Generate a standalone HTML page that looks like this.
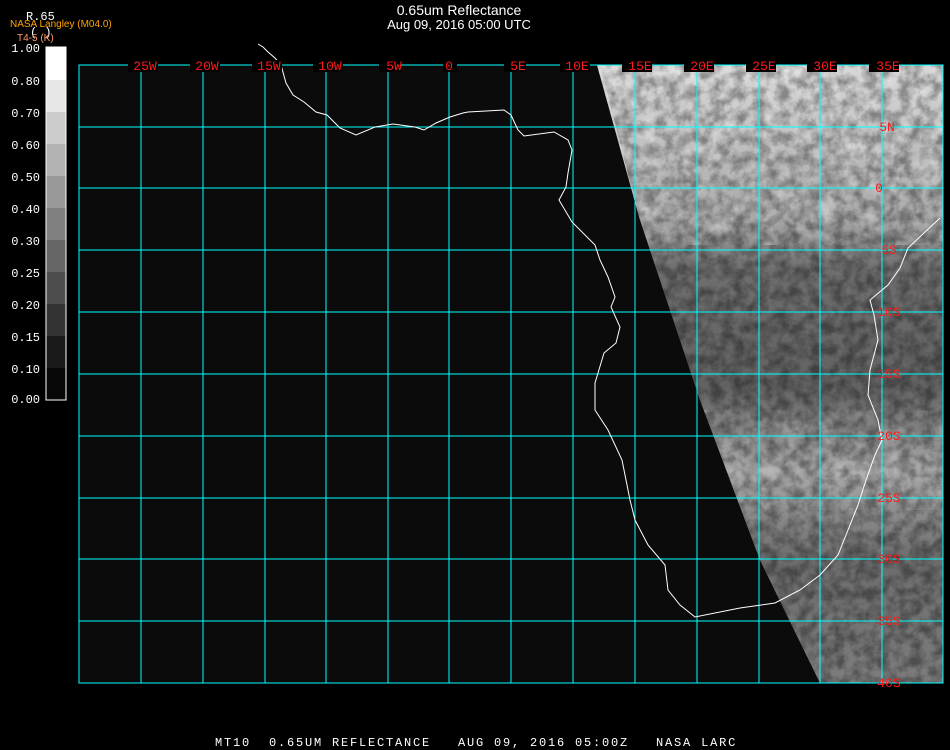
<!DOCTYPE html>
<html><head><meta charset="utf-8"><style>
html,body{margin:0;padding:0;background:#000;}
body{width:950px;height:750px;position:relative;overflow:hidden;font-family:"Liberation Sans",sans-serif;}
.t{position:absolute;color:#fff;font-size:14px;width:950px;text-align:center;left:-16px;}
</style></head><body>
<div class="t" style="top:2px">0.65um Reflectance</div>
<div class="t" style="top:17px;font-size:13px">Aug 09, 2016 05:00 UTC</div>
<svg width="950" height="750" style="position:absolute;left:0;top:0" xmlns="http://www.w3.org/2000/svg">
<defs>
<filter id="n" x="0" y="0" width="100%" height="100%">
<feTurbulence type="fractalNoise" baseFrequency="0.09" numOctaves="4" seed="7"/>
<feColorMatrix type="matrix" values="0 0 0 0 0  0 0 0 0 0  0 0 0 0 0  0 0 0 -2.2 1.5"/>
</filter>
<filter id="w" x="0" y="0" width="100%" height="100%">
<feTurbulence type="fractalNoise" baseFrequency="0.05" numOctaves="3" seed="11"/>
<feColorMatrix type="matrix" values="0 0 0 0 1  0 0 0 0 1  0 0 0 0 1  0 0 0 2.5 -1.2"/>
</filter>
<linearGradient id="g" x1="0" y1="0" x2="0" y2="1">
<stop offset="0" stop-color="#d8d8d8"/><stop offset="0.25" stop-color="#a8a8a8"/>
<stop offset="0.33" stop-color="#6e6e6e"/><stop offset="0.52" stop-color="#626262"/>
<stop offset="0.66" stop-color="#a8a8a8"/><stop offset="0.8" stop-color="#6c6c6c"/><stop offset="1" stop-color="#7c7c7c"/>
</linearGradient>
<clipPath id="c"><polygon points="597,65 943,65 943,683 820,683 760,560 700,400 640,220"/></clipPath>
</defs>
<rect x="79" y="65" width="864" height="618" fill="#0b0b0b"/>
<g clip-path="url(#c)">
<rect x="590" y="65" width="360" height="618" fill="url(#g)"/>
<rect x="590" y="65" width="360" height="618" fill="#000" filter="url(#n)" opacity="0.35"/>
<rect x="590" y="65" width="360" height="180" fill="#fff" filter="url(#w)" opacity="0.4"/>
<rect x="590" y="410" width="360" height="100" fill="#fff" filter="url(#w)" opacity="0.25"/>
<polygon points="600,65 640,220 700,400 760,560 820,683 805,683 745,560 685,400 625,220 588,65" fill="#e8e8e8" opacity="0.55"/>
</g>
<g stroke="#00ffff" stroke-width="1" fill="none" shape-rendering="crispEdges">
<rect x="79" y="65" width="864" height="618"/>
<path d="M141 65V683M203 65V683M265 65V683M326 65V683M388 65V683M449 65V683M511 65V683M573 65V683M635 65V683M697 65V683M759 65V683M820 65V683M882 65V683"/>
<path d="M79 127H943M79 188H943M79 250H943M79 312H943M79 374H943M79 436H943M79 498H943M79 559H943M79 621H943"/>
</g>
<polyline fill="none" stroke="#fff" stroke-width="1" points="258,44 263,47 268,52 275,58 281,65 286,83 293,95 304,102 316,112 327,115 340,128 356,135 375,127 393,124 415,127 424,130 436,123 450,117 463,113 468,112 504,110 511,115 518,130 524,136 554,132 568,140 572,150 568,173 566,187 559,200 572,222 595,245 600,260 608,277 615,297 611,307 620,327 616,343 604,353 595,383 595,410 608,430 622,460 630,500 635,520 648,545 665,565 668,590 680,605 695,617 740,608 775,603 800,590 820,575 838,555 848,530 858,505 866,480 875,455 882,440 878,420 868,395 870,370 878,340 874,315 870,300 888,285 900,268 908,248 925,232 940,218"/>
<g fill="#ff1a1a" font-family="Liberation Mono,monospace" font-size="13" text-anchor="middle">
<g fill="#000" stroke="none">
<rect x="128" y="60" width="30" height="12"/><rect x="190" y="60" width="30" height="12"/><rect x="252" y="60" width="30" height="12"/><rect x="313" y="60" width="30" height="12"/><rect x="379" y="60" width="22" height="12"/><rect x="443" y="60" width="14" height="12"/><rect x="504" y="60" width="22" height="12"/><rect x="560" y="60" width="30" height="12"/><rect x="622" y="60" width="30" height="12"/><rect x="684" y="60" width="30" height="12"/><rect x="746" y="60" width="30" height="12"/><rect x="807" y="60" width="30" height="12"/><rect x="869" y="60" width="30" height="12"/>
</g>
<text x="145" y="70">25W</text><text x="207" y="70">20W</text><text x="269" y="70">15W</text><text x="330" y="70">10W</text><text x="394" y="70">5W</text><text x="449" y="70">0</text><text x="518" y="70">5E</text><text x="577" y="70">10E</text><text x="640" y="70">15E</text><text x="702" y="70">20E</text><text x="764" y="70">25E</text><text x="825" y="70">30E</text><text x="888" y="70">35E</text>
<text x="887" y="131">5N</text><text x="879" y="192">0</text><text x="889" y="254">5S</text><text x="889" y="316">10S</text><text x="889" y="378">15S</text><text x="889" y="440">20S</text><text x="889" y="502">25S</text><text x="889" y="563">30S</text><text x="889" y="625">35S</text><text x="889" y="687">40S</text>
</g>
<g>
<rect x="46" y="47" width="20" height="33" fill="#fff"/><rect x="46" y="80" width="20" height="32" fill="#e6e6e6"/><rect x="46" y="112" width="20" height="32" fill="#cccccc"/><rect x="46" y="144" width="20" height="32" fill="#b3b3b3"/><rect x="46" y="176" width="20" height="32" fill="#999"/><rect x="46" y="208" width="20" height="32" fill="#808080"/><rect x="46" y="240" width="20" height="32" fill="#666"/><rect x="46" y="272" width="20" height="32" fill="#4d4d4d"/><rect x="46" y="304" width="20" height="32" fill="#333"/><rect x="46" y="336" width="20" height="32" fill="#1a1a1a"/><rect x="46" y="368" width="20" height="32" fill="#080808"/>
<rect x="46" y="47" width="20" height="353" fill="none" stroke="#fff" stroke-width="1" shape-rendering="crispEdges"/>
</g>
<g fill="#fff" font-family="Liberation Mono,monospace" font-size="12" text-anchor="end">
<text x="40" y="52">1.00</text><text x="40" y="85">0.80</text><text x="40" y="117">0.70</text><text x="40" y="149">0.60</text><text x="40" y="181">0.50</text><text x="40" y="213">0.40</text><text x="40" y="245">0.30</text><text x="40" y="277">0.25</text><text x="40" y="309">0.20</text><text x="40" y="341">0.15</text><text x="40" y="373">0.10</text><text x="40" y="403">0.00</text>
</g>
<text x="26" y="20" fill="#fff" font-family="Liberation Mono,monospace" font-size="12">R.65</text>
<text x="30" y="36" fill="#fff" font-family="Liberation Mono,monospace" font-size="12">(  )</text>
<text x="10" y="27" fill="#ffa500" font-family="Liberation Sans,sans-serif" font-size="10">NASA Langley (M04.0)</text>
<text x="17" y="41" fill="#ff9966" font-family="Liberation Sans,sans-serif" font-size="10">T4-5 (K)</text>
<text x="215" y="746" fill="#fff" font-family="Liberation Mono,monospace" font-size="12" letter-spacing="1.8" xml:space="preserve">MT10  0.65UM REFLECTANCE   AUG 09, 2016 05:00Z   NASA LARC</text>
</svg>
</body></html>
